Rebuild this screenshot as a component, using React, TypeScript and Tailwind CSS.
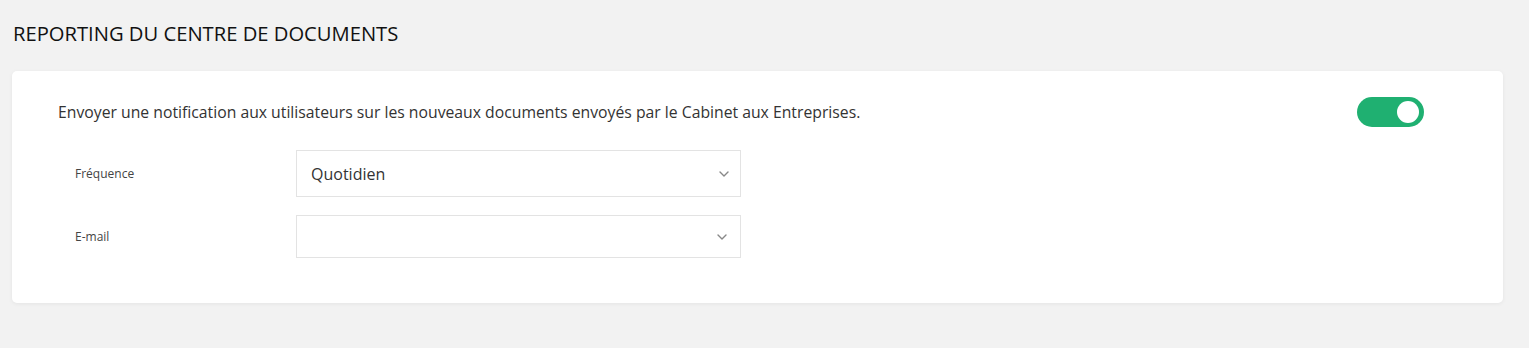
import { useState } from 'react'

const Chevron = () => (
   <svg width="10" height="6" viewBox="0 0 10 6" fill="none" className="text-[#888]">
      <path d="M1 1l4 4 4-4" stroke="currentColor" strokeWidth="1.4" strokeLinecap="round" strokeLinejoin="round" />
   </svg>
)

const App = () => {
   const [enabled, setEnabled] = useState(true)

   return (
      <div className="min-h-[348px] bg-[#f2f2f2] px-3 pt-[20px] font-['Open_Sans',sans-serif]">
         <h1 className="pl-px text-[20.2px] leading-[26px] text-[#111]">REPORTING DU CENTRE DE DOCUMENTS</h1>

         <div className="mt-[25px] w-[1491px] rounded-[5px] bg-white pb-[45px] pl-[46px] pr-[79px] pt-[26px] shadow-[0_1px_4px_rgba(0,0,0,0.06)]">
            <div className="flex items-center justify-between">
               <p className="text-[15.75px] leading-[30px] text-[#333]">
                  Envoyer une notification aux utilisateurs sur les nouveaux documents envoyés par le
                  Cabinet aux Entreprises.
               </p>
               <button
                  onClick={() => setEnabled(!enabled)}
                  className={`flex h-[30px] w-[67px] items-center rounded-full px-1 ${enabled ? 'justify-end bg-[#1fb071]' : 'justify-start bg-[#ccc]'}`}
               >
                  <span className="mr-[1px] size-[22px] rounded-full bg-white" />
               </button>
            </div>

            <div className="mt-[23px] flex items-center pl-[17px]">
               <label className="w-[221px] text-[12px] text-[#444]">Fréquence</label>
               <div className="flex h-[47px] w-[445px] items-center justify-between border border-[#e3e3e3] pl-[14px] pr-[11px]">
                  <span className="text-[16px] text-[#333]">Quotidien</span>
                  <Chevron />
               </div>
            </div>

            <div className="mt-[18px] flex items-center pl-[17px]">
               <label className="w-[221px] text-[12px] text-[#444]">E-mail</label>
               <div className="flex h-[43px] w-[445px] items-center justify-end border border-[#e3e3e3] pr-[13px]">
                  <Chevron />
               </div>
            </div>
         </div>
      </div>
   )
}

export default App
